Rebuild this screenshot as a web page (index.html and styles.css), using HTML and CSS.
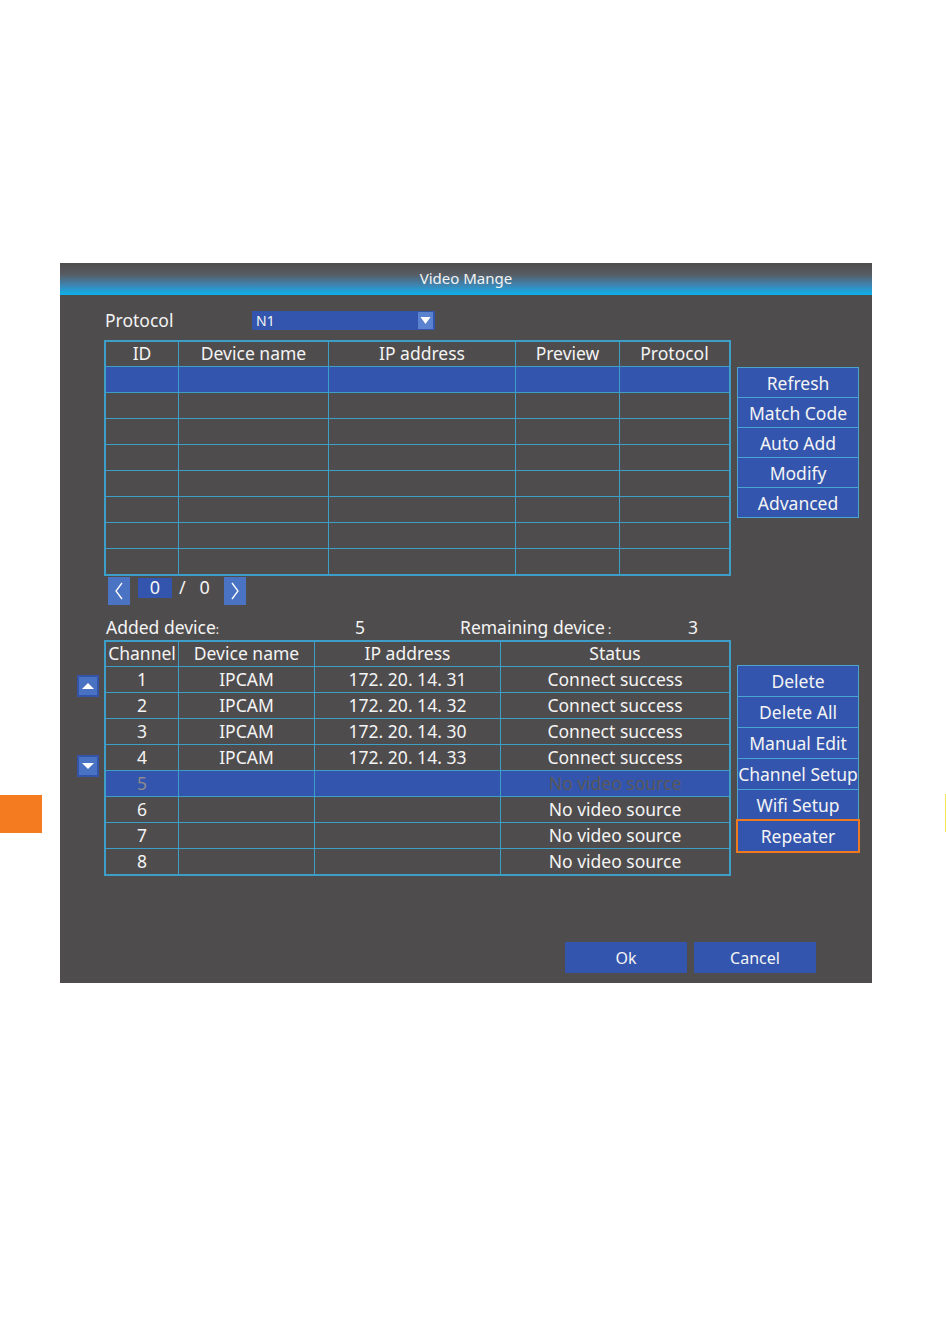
FILE: index.html
```html
<!DOCTYPE html>
<html lang="en">
<head>
    <meta charset="UTF-8">
    <title>Video Mange</title>
    <link rel="stylesheet" href="styles.css">
</head>
<body>
<div class="page">
    <div class="gutter-left"><div class="tab-mark"></div></div>

    <div class="dialog">
        <div class="dialog-title">Video Mange</div>

        <div class="dialog-body">
            <div class="protocol-row">
                <span class="protocol-label">Protocol</span>
                <div class="select">
                    <span>N1</span>
                    <span class="select-arrow">
                        <svg width="15" height="17" viewBox="0 0 15 17"><polygon points="2.5,5 12.5,5 7.5,12" fill="#fff"/></svg>
                    </span>
                </div>
            </div>

            <!-- devices found on the network -->
            <div class="search-row">
                <table class="grid search-grid">
                    <tr class="head"><td>ID</td><td>Device name</td><td>IP address</td><td>Preview</td><td>Protocol</td></tr>
                    <tr class="selected"><td></td><td></td><td></td><td></td><td></td></tr>
                    <tr><td></td><td></td><td></td><td></td><td></td></tr>
                    <tr><td></td><td></td><td></td><td></td><td></td></tr>
                    <tr><td></td><td></td><td></td><td></td><td></td></tr>
                    <tr><td></td><td></td><td></td><td></td><td></td></tr>
                    <tr><td></td><td></td><td></td><td></td><td></td></tr>
                    <tr><td></td><td></td><td></td><td></td><td></td></tr>
                    <tr><td></td><td></td><td></td><td></td><td></td></tr>
                </table>
                <div class="side-buttons search-buttons">
                    <div class="btn">Refresh</div>
                    <div class="btn">Match Code</div>
                    <div class="btn">Auto Add</div>
                    <div class="btn">Modify</div>
                    <div class="btn">Advanced</div>
                </div>
            </div>

            <div class="pager">
                <div class="page-btn">
                    <svg width="22" height="28" viewBox="0 0 22 28"><polyline points="14,6 8,14 14,22" fill="none" stroke="#fff" stroke-width="1.3"/></svg>
                </div>
                <div class="page-input">0</div>
                <span class="page-sep">/</span>
                <span class="page-total">0</span>
                <div class="page-btn">
                    <svg width="22" height="28" viewBox="0 0 22 28"><polyline points="8,6 14,14 8,22" fill="none" stroke="#fff" stroke-width="1.3"/></svg>
                </div>
            </div>

            <div class="summary">
                <span class="sum-label">Added device<small>:</small></span>
                <span class="sum-value">5</span>
                <span class="sum-label2">Remaining device<small> :</small></span>
                <span>3</span>
            </div>

            <!-- devices already bound to channels -->
            <div class="added-row">
                <div class="scroll-arrows">
                    <div class="arrow-btn">
                        <svg width="18" height="18" viewBox="0 0 18 18"><polygon points="3,12 9,6 15,12" fill="#fff"/></svg>
                    </div>
                    <div class="arrow-btn">
                        <svg width="18" height="18" viewBox="0 0 18 18"><polygon points="3,6 15,6 9,12" fill="#fff"/></svg>
                    </div>
                </div>
                <table class="grid added-grid">
                    <tr class="head"><td>Channel</td><td>Device name</td><td>IP address</td><td>Status</td></tr>
                    <tr><td>1</td><td>IPCAM</td><td>172. 20. 14. 31</td><td>Connect success</td></tr>
                    <tr><td>2</td><td>IPCAM</td><td>172. 20. 14. 32</td><td>Connect success</td></tr>
                    <tr><td>3</td><td>IPCAM</td><td>172. 20. 14. 30</td><td>Connect success</td></tr>
                    <tr><td>4</td><td>IPCAM</td><td>172. 20. 14. 33</td><td>Connect success</td></tr>
                    <tr class="selected"><td class="dim">5</td><td></td><td></td><td class="dimmer">No video source</td></tr>
                    <tr><td>6</td><td></td><td></td><td>No video source</td></tr>
                    <tr><td>7</td><td></td><td></td><td>No video source</td></tr>
                    <tr><td>8</td><td></td><td></td><td>No video source</td></tr>
                </table>
                <div class="side-buttons added-buttons">
                    <div class="btn">Delete</div>
                    <div class="btn">Delete All</div>
                    <div class="btn">Manual Edit</div>
                    <div class="btn">Channel Setup</div>
                    <div class="btn">Wifi Setup</div>
                    <div class="btn focused">Repeater</div>
                </div>
            </div>

            <div class="footer">
                <div class="footer-btn">Ok</div>
                <div class="footer-btn">Cancel</div>
            </div>
        </div>
    </div>

    <div class="gutter-right"><div class="edge-mark"></div></div>
</div>
</body>
</html>
```

FILE: styles.css
```css
body { margin: 0; background: #fff; font-family: "Noto Sans", "Open Sans", sans-serif; color: #f4f4f4; }

.page { display: grid; grid-template-columns: 60px 812px 1fr; padding-top: 263px; height: 1324px; box-sizing: border-box; }
.tab-mark { width: 42px; height: 38px; margin-top: 532px; background: #f47b20; }
.edge-mark { width: 2px; height: 38px; margin: 531px 0 0 73px; background: #f6e356; }

.dialog { height: 720px; background: #4f4c4d; display: flex; flex-direction: column; }
.dialog-title { height: 32px; line-height: 30px; text-align: center; font-size: 15px;
    background: linear-gradient(#4e4c4d 0%, #585c62 35%, #3d86b4 70%, #0bb2ec 100%); }
.dialog-body { padding: 15px 0 0 45px; display: flex; flex-direction: column; }

.protocol-row { display: flex; align-items: center; height: 20px; }
.protocol-label { width: 147px; font-size: 17.5px; }
.select { width: 183px; height: 19px; background: #3355ad; display: flex; align-items: center; justify-content: space-between; font-size: 14px; padding-left: 4px; box-sizing: border-box; }
.select-arrow { width: 15px; height: 17px; margin-right: 2px; background: #5b82cf; display: flex; }

/* shared grid tables */
.grid { border-collapse: collapse; border: 2px solid #3d9fc8; table-layout: fixed; font-size: 17.5px; margin-left: -1px; }
.grid td { border: 1px solid #3d9fc8; height: 25px; padding: 0; text-align: center; white-space: nowrap; line-height: 1; }
.grid .head td { height: 24px; }
.grid .selected td { background: #3355ad; }
.grid .dim { color: #8b8a8f; }
.grid .dimmer { color: #5a5859; }

.search-row { display: flex; margin-top: 10px; }
.search-grid { width: 627px; }
.search-grid td:nth-child(1) { width: 72px; }
.search-grid td:nth-child(2) { width: 149px; }
.search-grid td:nth-child(3) { width: 186px; }
.search-grid td:nth-child(4) { width: 103px; }

.side-buttons { width: 120px; margin-left: 6px; display: flex; flex-direction: column; gap: 1px; background: #4aa6d0; border: 1px solid #4aa6d0; align-self: flex-start; }
.side-buttons .btn { height: 29px; line-height: 30px; background: #3355ad; text-align: center; font-size: 17.5px; white-space: nowrap; }
.search-buttons { margin-top: 27px; }
.added-buttons { margin-top: 25px; }
.added-buttons .btn { height: 30px; line-height: 31px; }
.side-buttons .focused { outline: 2px solid #f07a1e; }

.pager { display: flex; align-items: flex-start; height: 28px; margin: 1px 0 0 3px; font-size: 18px; }
.page-btn { width: 22px; height: 28px; background: #4a73c4; display: flex; }
.page-input { width: 34px; height: 20px; margin: 1px 0 0 8px; background: #3355ad; text-align: center; line-height: 18px; }
.page-sep { margin: 0 0 0 7px; line-height: 20px; }
.page-total { width: 38px; text-align: center; line-height: 20px; }

.summary { display: flex; height: 24px; line-height: 24px; margin: 10px 0 0 1px; font-size: 17.5px; }
.summary small { font-size: 12px; }
.sum-label { width: 249px; }
.sum-value { width: 105px; }
.sum-label2 { width: 228px; }

.added-row { display: flex; margin: 1px 0 0 -45px; }
.scroll-arrows { width: 45px; display: flex; flex-direction: column; gap: 58px; padding: 35px 0 0 17px; box-sizing: border-box; }
.arrow-btn { width: 18px; height: 18px; border: 2px solid #3453ab; background: #4a72c3; display: flex; }
.added-grid { width: 627px; }
.added-grid td:nth-child(1) { width: 72px; }
.added-grid td:nth-child(2) { width: 135px; }
.added-grid td:nth-child(3) { width: 185px; }

.footer { display: flex; gap: 7px; margin: 66px 0 0 460px; }
.footer-btn { width: 122px; height: 31px; line-height: 33px; background: #3355ad; text-align: center; font-size: 16px; }
```
